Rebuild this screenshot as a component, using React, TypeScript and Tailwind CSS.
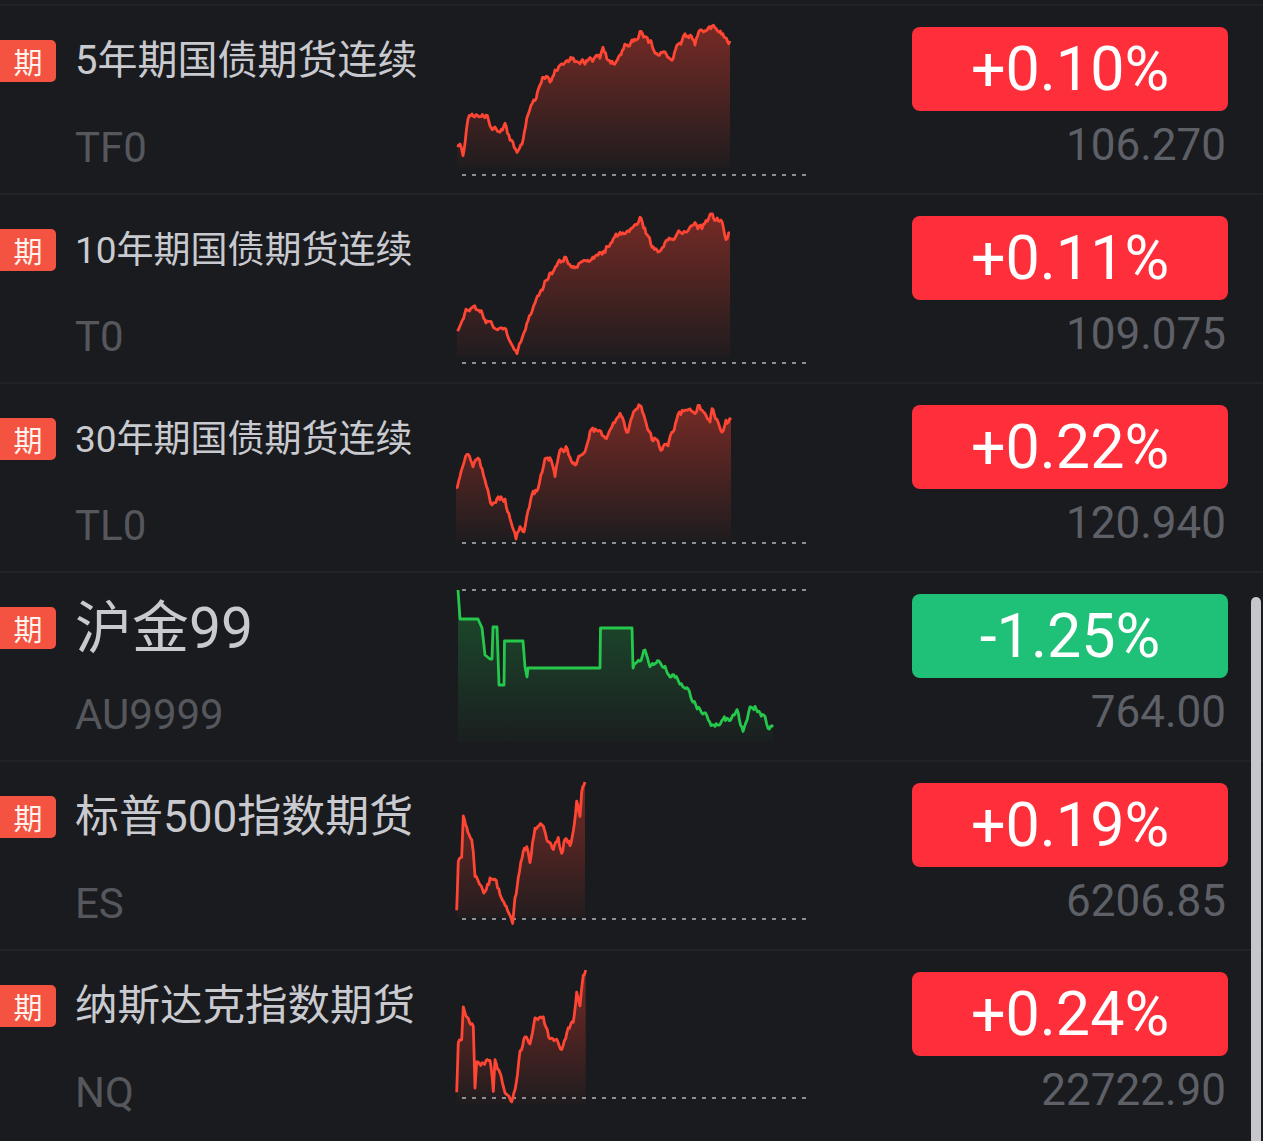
import React from 'react';

type Pt = [number, number];

type Quote = {
  name: string;
  nameSize: string;
  code: string;
  pct: string;
  price: string;
  up: boolean;
  top: number;
  base: number;
  fillBottom: number;
  flatUntil?: number;
  keys: Pt[];
};

// chart box sits at page x=455, 355 wide
const CHART_X = 455;

const quotes: Quote[] = [
  {
    name: '5年期国债期货连续',
    nameSize: 'text-[40px]',
    code: 'TF0',
    pct: '+0.10%',
    price: '106.270',
    up: true,
    top: 6,
    base: 175,
    fillBottom: 168,
    keys: [
      [457, 148], [460, 146], [463, 157], [465, 140], [468, 118], [472, 114], [480, 116], [486, 114],
      [490, 124], [496, 130], [500, 133], [505, 127], [510, 138], [517, 156], [522, 143], [528, 115],
      [535, 100], [540, 82], [545, 76], [550, 82], [555, 70], [560, 63], [566, 64], [572, 58], [580, 63],
      [590, 60], [600, 58], [603, 48], [608, 61], [616, 62], [621, 54], [626, 44], [632, 42], [638, 40],
      [640, 30], [646, 38], [651, 43], [658, 56], [665, 52], [672, 58], [678, 46], [685, 37], [690, 35],
      [695, 43], [700, 32], [706, 30], [712, 28], [719, 31], [724, 38], [730, 41],
    ],
  },
  {
    name: '10年期国债期货连续',
    nameSize: 'text-[37px]',
    code: 'T0',
    pct: '+0.11%',
    price: '109.075',
    up: true,
    top: 195,
    base: 363,
    fillBottom: 357,
    keys: [
      [457, 332], [461, 326], [466, 312], [472, 306], [480, 310], [486, 320], [490, 318], [496, 328],
      [503, 326], [510, 340], [517, 351], [522, 340], [528, 322], [535, 305], [540, 295], [546, 280],
      [552, 272], [558, 262], [566, 258], [572, 268], [580, 262], [590, 262], [598, 256], [605, 250],
      [612, 240], [620, 234], [628, 230], [634, 225], [640, 218], [646, 232], [652, 246], [658, 252],
      [665, 242], [672, 240], [680, 232], [688, 230], [695, 226], [702, 228], [710, 216], [716, 220],
      [722, 222], [726, 238], [730, 233],
    ],
  },
  {
    name: '30年期国债期货连续',
    nameSize: 'text-[37px]',
    code: 'TL0',
    pct: '+0.22%',
    price: '120.940',
    up: true,
    top: 384,
    base: 543,
    fillBottom: 540,
    keys: [
      [456, 490], [460, 478], [467, 455], [473, 465], [478, 458], [485, 478], [492, 505], [497, 498],
      [505, 500], [510, 520], [516, 540], [520, 525], [524, 530], [532, 495], [538, 490], [545, 460],
      [550, 458], [555, 475], [560, 450], [566, 448], [570, 458], [575, 462], [585, 450], [590, 430],
      [598, 430], [605, 440], [612, 425], [620, 416], [628, 432], [635, 410], [640, 405], [645, 420],
      [652, 438], [658, 440], [662, 450], [668, 445], [678, 415], [685, 410], [695, 415], [698, 408],
      [705, 410], [710, 420], [712, 405], [718, 425], [722, 432], [726, 422], [731, 420],
    ],
  },
  {
    name: '沪金99',
    nameSize: 'text-[57px]',
    code: 'AU9999',
    pct: '-1.25%',
    price: '764.00',
    up: false,
    top: 573,
    base: 590,
    fillBottom: 742,
    flatUntil: 634,
    keys: [
      [458, 590], [460, 619], [478, 619], [482, 628], [485, 655], [490, 659], [492, 659], [493, 627],
      [497, 627], [499, 685], [504, 685], [504.5, 641], [523, 641], [525, 667], [527, 677], [528, 668],
      [600, 668], [600.5, 628], [632, 628], [633, 668], [637, 665], [645, 650], [650, 667], [660, 660],
      [670, 673], [680, 683], [687, 690], [693, 703], [700, 710], [707, 717], [715, 728], [723, 720],
      [733, 717], [737, 712], [743, 732], [750, 708], [755, 707], [760, 710], [765, 720], [768, 730],
      [773, 727],
    ],
  },
  {
    name: '标普500指数期货',
    nameSize: 'text-[44px]',
    code: 'ES',
    pct: '+0.19%',
    price: '6206.85',
    up: true,
    top: 762,
    base: 919,
    fillBottom: 918,
    keys: [
      [456.7, 913], [458.3, 863], [461.7, 857], [463.3, 815], [466.7, 825], [471.7, 840], [473.3, 850],
      [475, 877], [480, 885], [485, 893], [490, 880], [495, 880], [500, 893], [505, 905], [510, 913],
      [512.7, 920], [515, 900], [518.3, 880], [523.3, 850], [526.7, 847], [530, 860], [535, 825],
      [543.3, 825], [546.7, 837], [553.3, 852], [558.3, 840], [561.7, 855], [565, 838], [570, 845],
      [573.3, 832], [576.7, 803], [580, 817], [581.7, 793], [585, 782],
    ],
  },
  {
    name: '纳斯达克指数期货',
    nameSize: 'text-[42.5px]',
    code: 'NQ',
    pct: '+0.24%',
    price: '22722.90',
    up: true,
    top: 951,
    base: 1098,
    fillBottom: 1104,
    keys: [
      [456.7, 1095], [458.3, 1043], [461.7, 1040], [463.3, 1008], [468.3, 1018], [473.3, 1027],
      [475, 1090], [476.7, 1063], [483.3, 1065], [490, 1057], [493.3, 1090], [495, 1060], [500, 1073],
      [505, 1093], [511.7, 1103], [515, 1090], [520, 1053], [525, 1037], [530, 1040], [535, 1018],
      [543.3, 1020], [550, 1040], [556.7, 1037], [561.7, 1047], [568.3, 1027], [573.3, 1023],
      [576.7, 990], [580, 1005], [583.3, 973], [585.7, 970],
    ],
  },
];

const seeded = (seed: number) => () => {
  seed = (seed * 16807) % 2147483647;
  return seed / 2147483647;
};

const buildPoints = (q: Quote, seed: number) => {
  const rand = seeded(seed);
  const out: Pt[] = [];
  let n = 0;
  for (let i = 0; i < q.keys.length - 1; i++) {
    const [x0, y0] = q.keys[i];
    const [x1, y1] = q.keys[i + 1];
    const steps = Math.max(1, Math.round((x1 - x0) / 1.3));
    for (let s = 0; s < steps; s++) {
      const t = s / steps;
      const x = x0 + (x1 - x0) * t;
      let y = y0 + (y1 - y0) * t;
      if (!q.flatUntil || x > q.flatUntil) {
        n = n * 0.45 + (rand() - 0.5) * 5.5;
        y += n;
      }
      out.push([x - CHART_X, y - q.top]);
    }
  }
  const last = q.keys[q.keys.length - 1];
  out.push([last[0] - CHART_X, last[1] - q.top]);
  return out;
};

const Spark = ({ q, idx }: { q: Quote; idx: number }) => {
  const pts = buildPoints(q, 977 + idx * 131);
  const line = pts.map((p, i) => `${i ? 'L' : 'M'}${p[0].toFixed(1)} ${p[1].toFixed(1)}`).join(' ');
  const bottom = q.fillBottom - q.top;
  const fill = `${line} L${pts[pts.length - 1][0].toFixed(1)} ${bottom} L${pts[0][0].toFixed(1)} ${bottom} Z`;
  const color = q.up ? '#ff4634' : '#26c84c';
  const gid = `g${idx}`;
  const baseY = q.base - q.top;

  return (
    <svg width={355} height={187} className="shrink-0 overflow-visible">
      <defs>
        <linearGradient id={gid} x1="0" y1="0" x2="0" y2="1">
          <stop offset="0" stopColor={q.up ? '#d23a2c' : '#1f9c45'} stopOpacity={q.up ? 0.5 : 0.4} />
          <stop offset="1" stopColor={q.up ? '#d23a2c' : '#1f9c45'} stopOpacity={0.03} />
        </linearGradient>
      </defs>
      <path d={fill} fill={`url(#${gid})`} />
      <line x1={7} x2={351} y1={baseY} y2={baseY} stroke="#8e8f94" strokeWidth={2} strokeDasharray="4 6" />
      <path d={line} fill="none" stroke={color} strokeWidth={2.8} strokeLinejoin="round" />
    </svg>
  );
};

const Row = ({ q, idx }: { q: Quote; idx: number }) => (
  <div className="flex h-[189px] border-t-2 border-[#222327]">
    <div className="flex w-[455px] shrink-0 flex-col">
      <div className="mt-[34px] flex h-[42px] items-center">
        <div className="flex h-[42px] w-[56px] items-center justify-center rounded-r-[5px] bg-[#f35340] text-[29px] leading-none text-[#fff3ee] font-['Noto_Sans_CJK_SC',sans-serif]">
          期
        </div>
        <span className={`ml-[19px] whitespace-nowrap leading-none text-[#c9cad0] font-['Roboto','Noto_Sans_CJK_SC',sans-serif] ${q.nameSize}`}>
          {q.name}
        </span>
      </div>
      <div className="ml-[75px] mt-[45px] text-[42px] leading-none text-[#55575d] font-['Roboto',sans-serif]">
        {q.code}
      </div>
    </div>
    <Spark q={q} idx={idx} />
    <div className="flex-1" />
    <div className="mr-[35px] flex w-[316px] shrink-0 flex-col items-end">
      <div
        className={`mt-[21px] flex h-[84px] w-full items-center justify-center rounded-[8px] text-[61px] leading-none text-white font-['Roboto',sans-serif] ${
          q.up ? 'bg-[#fe2e3b]' : 'bg-[#1fc077]'
        }`}
      >
        {q.pct}
      </div>
      <div className="mr-[2px] mt-[12px] text-[44px] leading-none text-[#5e6067] font-['Roboto',sans-serif]">
        {q.price}
      </div>
    </div>
  </div>
);

export default function App() {
  return (
    <div className="relative h-[1141px] w-[1263px] overflow-hidden bg-[#1a1b1e]">
      <div className="h-[4px]" />
      {quotes.map((q, i) => (
        <Row key={q.code} q={q} idx={i} />
      ))}
      <div className="absolute right-[2px] top-[597px] h-[560px] w-[10px] rounded-full bg-[#c6c7cb]" />
    </div>
  );
}
